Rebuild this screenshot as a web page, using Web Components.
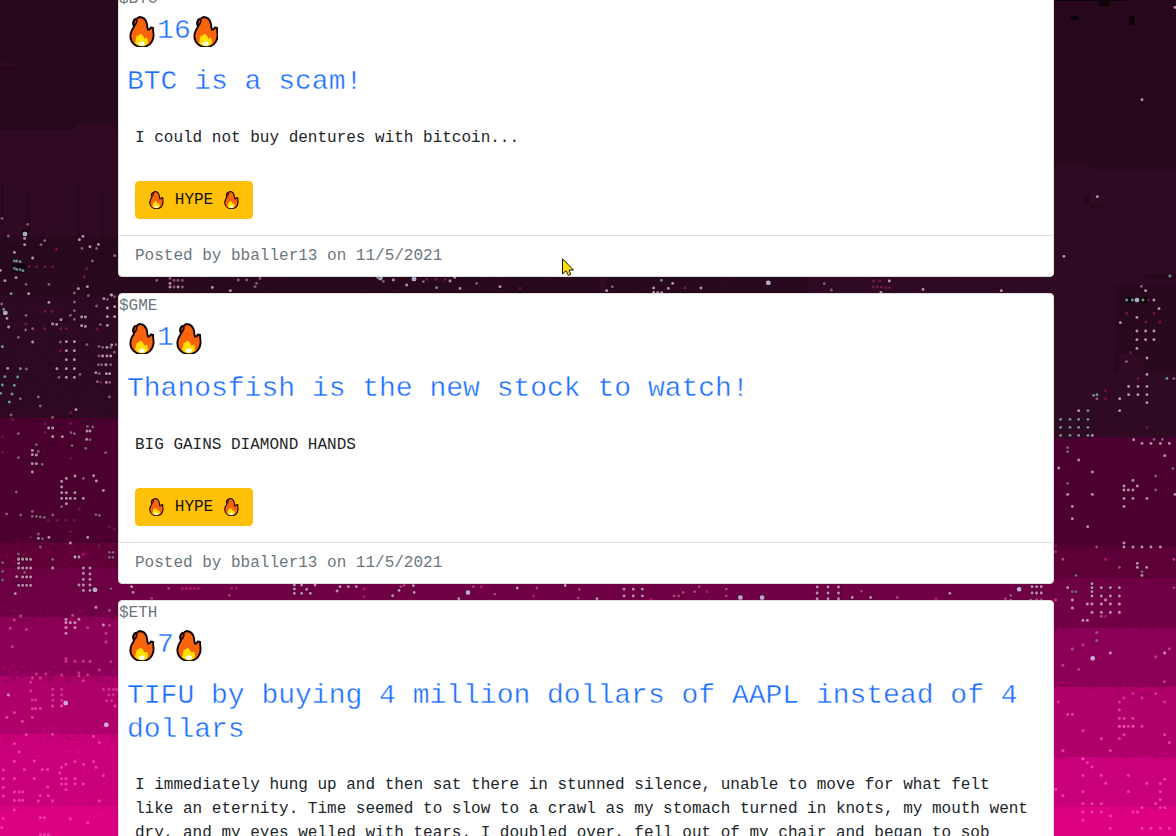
<!DOCTYPE html>
<html lang="en">
<head>
<meta charset="utf-8">
<title>Hype feed</title>
<style>
html,body{margin:0;height:100%;overflow:hidden;background:#25071a}
body{font:16px/24px "Liberation Mono",monospace;color:#212529}
</style>
</head>
<body>
<hype-feed></hype-feed>
<script>
class FlameIcon extends HTMLElement{
  constructor(){super();this.attachShadow({mode:'open'}).innerHTML=`
<style>:host{display:inline-flex;width:1.075em;height:1.12em;justify-content:center;vertical-align:-.2em}svg{display:block;width:.9em;height:1.14em;flex:none}</style>
<svg viewBox="-1 0 74 94" preserveAspectRatio="none" aria-hidden="true">
<path d="M29 3C42 3 50 13 52 25C53 32 53 36 55 41C60 40 62 38 63 34L70 35C69 44 72 51 71 60C69 79 56 91 37 91C17 91 3 78 3 60C3 46 9 38 14 31C8 22 11 8 23 8C23 5 26 4 29 3Z" fill="#f8640c" stroke="#120406" stroke-width="5.5" stroke-linejoin="round"/>
<path d="M14 29C11 21 12 11 21 9C24 16 20 25 14 29Z" fill="#d64a05" stroke="#120406" stroke-width="4.5"/>
<path d="M22 58C28 59 29 54 33 52C39 55 42 61 44 66L53 64C52 70 57 73 54 80C50 87 44 89 36 89C27 89 20 86 17 79C19 71 19 65 22 58Z" fill="#ffde00"/>
<path d="M28 76L33 79L38 72L42 79L46 76C47 83 42 88 36 88C30 87 26 83 28 76Z" fill="#fff"/>
</svg>`}
}
customElements.define('flame-icon',FlameIcon);

class HypeCard extends HTMLElement{
  constructor(){super();this.attachShadow({mode:'open'}).innerHTML=`
<style>
:host{display:flex;flex-direction:column;box-sizing:border-box;min-height:291px;background:#fff;border:1px solid #dfdfdf;border-radius:4px;flex:none}
.ticker{color:#6c757d;height:24px}
.score,.title{color:#1a6dff;font-size:28px;line-height:33.6px;padding:0 8px;font-weight:400;margin:0;-webkit-text-stroke:.4px #fff}
.score{padding-top:3.4px;height:33.6px;display:flex;align-items:center}
.title{padding-top:17px}
.body{padding:27px 16px 16px;display:flex;flex-direction:column;align-items:flex-start;gap:31px}
p{margin:0}
button{font:inherit;line-height:24px;height:38px;border:1px solid #ffc107;background:#ffc107;color:#111;border-radius:4px;padding:6px 12px;display:flex;align-items:center;white-space:pre}
.foot{border-top:1px solid #dfdfdf;padding:8.4px 16px 7px;color:#6c757d}
</style>
<div class="ticker"><slot name="ticker"></slot></div>
<h3 class="score"><flame-icon></flame-icon><slot name="score"></slot><flame-icon></flame-icon></h3>
<h3 class="title"><slot name="title"></slot></h3>
<div class="body"><p><slot></slot></p><button><flame-icon></flame-icon> HYPE <flame-icon></flame-icon></button></div>
<div class="foot"><slot name="meta"></slot></div>`}
}
customElements.define('hype-card',HypeCard);

class CityBackdrop extends HTMLElement{
  constructor(){
    super();
    let s=11;const R=()=>(s=(s*16807)%2147483647)/2147483647;
    let o='';
    const r=(x,y,w,h,f,a=1)=>{o+=`<rect x="${x}" y="${y}" width="${w}" height="${h}" fill="${f}" opacity="${a}"/>`};
    const L=[[0,130,'#26071b'],[130,109,'#300a23'],[236,60,'#28081d'],[296,122,'#2d0a21'],[418,125,'#4c002f'],[543,27,'#610038'],[568,49,'#6d0042'],[617,59,'#8b0056'],[676,58,'#ad0069'],[734,72,'#c90078'],[806,30,'#dc0083']];
    const G=[[0,170,'#26071b'],[169,269,'#2f0a23'],[437,110,'#4b002f'],[547,31,'#5c0037'],[578,50,'#6e0043'],[628,59,'#8b0056'],[687,70,'#af006a'],[757,50,'#ca0079'],[807,29,'#dd0083']];
    for(const b of L)r(0,b[0],600,b[1],b[2]);
    for(const b of G)r(600,b[0],576,b[1],b[2]);
    r(75,125,39,5,'#300a23');r(1054,165,35,5,'#2f0a23');
    r(1,184,3,45,'#29081e');r(26,190,4,42,'#29081e');r(76,184,4,52,'#29081e');r(100,191,4,45,'#29081e');
    r(0,63,15,3,'#300a23');r(1115,285,61,88,'#27081c');r(1119,354,24,18,'#300a23');
    r(1054,0,75,1,'#0c0306');r(1099,0,10,6,'#0c0306');r(1070,16,9,4,'#0c0306');r(1129,16,5,9,'#0c0306');
    r(1084,195,6,10,'#26071b');r(1090,204,15,4,'#27071c');r(1145,274,31,6,'#26071b');
    r(200,277,62,16,'#28081d');r(376,277,60,16,'#27081c');r(606,277,202,16,'#27081c');
    r(118,584,936,16,'#700044');
    // ragged, dithered edges between neighbouring bands
    const edge=(t,x0,x1,up,n,d)=>{for(let i=0;i<n;i++){const k=R()<.5;r((x0+R()*(x1-x0))|0,k?t-(R()*d|0)-2:t+(R()*d*.5|0),2+(R()*4|0),1+(R()*3|0),k?up[1]:up[0],.5)}};
    for(let i=2;i<L.length;i++)edge(L[i][0],0,114,[L[i-1][2],L[i][2]],50,10);
    for(let i=2;i<G.length;i++)edge(G[i][0],1054,1172,[G[i-1][2],G[i][2]],22,5);
    const noise=(x,y,w,h,n,f)=>{for(let i=0;i<n;i++)r((x+R()*w)|0,(y+R()*h)|0,1+(R()*3|0),1+(R()*2|0),f,.5)};
    noise(0,238,114,160,190,'#15060f');noise(0,400,114,50,110,'#2c0820');noise(40,415,60,40,50,'#1f0716');
    noise(1120,290,52,85,50,'#3a0c2a');noise(1056,395,116,42,70,'#450a30');noise(0,540,114,35,90,'#820050');
    noise(118,278,936,14,110,'#3a0d2b');noise(600,584,450,15,110,'#5c0038');noise(0,734,114,100,100,'#e0108c');
    noise(28,440,20,30,30,'#2c0820');noise(60,475,20,30,25,'#2c0820');noise(10,558,24,30,30,'#50002f');noise(1110,690,40,10,25,'#8b0056');
    r(1126,297,22,6,'#0b0408',.8);r(12,264,14,8,'#0d0509',.8);r(22,230,7,7,'#0b0408');

    // lit windows: tile origin, scale, then "x,y" pairs; a trailing letter sets the tone
    const tiles=[
     [0,0,3,'6,655d 83,673d 75,702b 74,715w 74,734w 25,708d 123,734d 134,722d 238,719w 249,709w 246,745d 270,740w 295,733w 290,745d 170,748r 43,757w 98,774w 277,783d 345,767d 43,783c 50,783c 60,785c 43,805c 50,808c 60,809c 69,812c 87,800r 110,800r 135,800r 158,800r 48,833w 1,811w 253,831r 260,806r'],
     [0,280,3,'15,2w 33,41c 78,13d 86,41w 147,13d 147,67w 235,26w 262,20w 265,47d 223,39d 223,66d 223,92d 223,118d 312,56w 333,45w 322,58d 322,84w 322,110w 322,136w 343,50d 290,78d 16,98b 11,88c 21,115w 26,141w 5,72d 78,106d 77,132r 77,150d 55,172d 98,146d 98,186w 135,94r 157,94r 134,146r 158,132w 170,133w 183,119w 211,106d 245,111w 256,111w 245,137w 256,139w 301,134d 291,147r 182,146r 199,146r 7,200c 181,186d 199,185w 223,185w 181,212r 199,212w 223,212w 199,239w 223,239w 199,266w 223,266w 199,292w 223,292w 171,266w 177,292d 240,283d 261,194d 297,199d 308,202d 321,202w 332,202d 348,194d 343,217d 297,228d 308,228w 321,228w 332,228w 295,254d 305,254d 318,254w 332,254d 288,278w 298,281d 319,281w 329,281w 292,305d 302,307r 319,307w 329,307d 23,265w 61,266c 79,267d 15,290c 53,291c 7,315c 43,316c 2,340c 36,342c 28,366c 61,356d 115,351d 121,378d 328,351d 33,405d 37,419r 228,389w 211,398r 158,412d 136,431r 146,444w 158,444w 136,458r 158,470w 187,470w 213,458d 211,430r 223,461d 262,439d 278,441d 261,453w 270,453w 260,478w 270,479d 257,505d 7,470r 55,461d 7,517r 216,497d 109,494d 97,511w 115,514d 97,524w 109,525w 97,551w 109,551w 127,553d 97,576w 55,533d 213,535r 317,518d 49,636d 225,588w 199,595w 185,604w 250,595d 281,587w 289,603w 310,631w 185,621w 185,638w 199,638w 225,638w 185,655w 199,655w 211,655w 225,655w 250,655w 199,671w 185,680d 20,702d 62,705d 97,694d 97,709d 109,709d 121,711d 133,712d 158,705d 145,721r 172,721r 197,721r 223,721r 288,704d 298,706d 238,687r 115,762d 115,775w 127,776d 147,772w 92,772r 121,801d 211,755r 211,789w 263,772w 298,797r 328,740r 343,748r 328,817d 339,817d 328,832d 339,832d 55,822d 55,835d 67,835d 79,835d 250,823r 225,831w 237,831w'],
     [0,556,3,'56,10w 68,10w 80,10w 92,10w 56,22w 56,36w 68,36w 80,36w 92,36w 50,62w 68,63w 80,63w 92,63w 56,88w 68,88w 80,88w 92,88w 74,49d 8,20d 8,46d 8,72d 158,10d 158,36w 225,3w 250,36w 270,36w 250,52w 270,54w 250,70w 270,70w 237,87w 250,87w 270,87w 250,103w 270,103w 285,101b 333,98d 46,113w 288,154w 328,163d 218,178d 62,180d 43,192p 31,217p 79,220p 198,190w 198,200w 211,200w 225,200w 237,190w 198,215w 225,215w 263,215p 198,232w 310,207w 328,208p 318,232p 318,258p 37,272p 198,308p 198,316p 225,316p 250,316p 270,316p 333,317p 298,342p 138,354p 109,354p 97,366p 121,366p 92,379p 185,357p 237,351p 237,360p 263,357p 250,374p 25,417w 158,400p 185,400p 158,417p 185,417p 158,433p 185,433p 158,450p 185,450w 197,441b 92,405p 97,432p 107,432p 97,458p 107,458p 121,458p 43,470p 21,484p 97,484p 67,496p 319,506b 310,400p 327,400p 340,400p 350,400p 327,417p 340,417p 320,434p 335,434p 345,450p 79,536p 158,535p 281,541p 298,560p 43,563p 57,588p 43,616p 73,641p 127,641p 143,641p 10,642p 10,668p 10,694p 10,720p 43,668p 103,615p 103,668p 43,708p 57,708p 68,708p 43,733p 57,733p 68,733p 43,762p 198,625p 225,617p 250,625p 185,634p 179,651p 281,617p 288,634p 310,659p 185,668p 198,668p 225,668p 185,684p 198,684p 225,684p 250,684p 198,701p 143,693p 121,719p 145,719p 115,735p 158,735p 298,735p 10,787p 121,785p 133,785p 211,789p 263,800p 5,815p 121,836p 133,836p 145,836p'],
     [1054,0,3,'264,299w 363,22w 130,590w 30,769w 348,828c'],
     [1054,280,3,'262,19d 275,32w 218,60c 235,60c 249,60b 267,60c 284,60r 300,60w 315,86w 249,112w 199,128w 275,126r 249,153w 275,153w 300,153w 249,179w 275,179w 300,179w 249,205w 279,234w 217,245d 229,218r 218,100r 300,100r 318,126r 279,283w 339,295c 252,295r 360,296d 224,319w 252,319w 279,319w 224,344w 252,344w 279,344w 279,368w 129,344c 119,346c 155,332r 155,356r 129,356d 197,356w 197,392w 74,392w 102,392c 20,418c 48,418c 74,418c 102,418c 20,442c 48,442c 74,442c 102,442c 20,466c 48,466c 74,466c 102,466c 115,466w 279,442r 239,479w 264,490w 291,490w 319,490w 346,490w 300,478d 325,478d 332,527w 357,565d 41,503d 41,515d 74,540w 14,564w 115,576w 41,610d 41,643w 115,643w 55,679w 55,716w 101,740w 305,588d 305,630d 237,601w 210,618w 250,618w 210,630w 223,630w 237,630w 210,655w 237,655w 279,655w 210,679w 363,643w 128,801p 210,789w 210,801w 237,801w 264,801w 291,801w 319,801w 27,837p 5,797r 5,815r'],
     [1054,556,3,'27,10p 196,34p 250,22w 250,34w 278,34w 264,47d 264,58w 155,10r 360,10p 66,58d 41,95w 55,107d 66,107d 55,132w 55,156w 114,83w 114,95w 114,107w 114,120w 114,144w 100,144w 114,169w 142,95w 142,120w 142,144w 142,169w 155,132w 169,95w 169,120w 169,144w 169,169w 196,95w 196,120w 196,144w 196,169w 87,193w 100,193w 142,181d 155,181r 5,132p 360,95p 128,230d 128,254d 87,267p 55,279d 116,307b 169,291w 27,328p 74,340p 305,303p 332,291w 346,279p 332,377p 237,413p 210,426p 264,426p 305,413p 196,438p 196,462p 13,438p 41,475p 55,475p 196,487p 210,487p 237,487p 196,511w 210,511w 223,511p 237,511w 264,511p 87,524p 210,536p 142,548p 196,548p 332,438p 332,536p 346,560p 27,584p 169,584p 87,609w 100,620p 114,633p 87,658p 142,658p 223,658p 155,682p 278,682p 332,670p 319,682p 87,707p 223,707p 319,707p 319,731p 27,719p 305,743p 87,743p 114,743p 142,743p 87,768p 114,768p 142,768p 87,793p 237,768p 250,768p 264,755p 319,755p 332,755p 169,780p 169,817p 264,817p 291,817p 319,817p 346,817p 5,700p'],
     [110,170,3,'14,257d 140,331d 180,325d 180,340w 180,351w 192,351d 204,351w 217,351d 192,331d 204,331d 217,331d 307,352w 361,362w 385,330d 410,330d 440,340d 450,325d 435,350d 811,324b 803,322c 820,334d 912,327b 950,328r 978,328r 1005,328r 1034,322w 5,375w 14,410w 14,440w 5,525w'],
     [540,225,3,'-440,165w -400,180w -350,170d -310,188c -270,168w -240,190w -190,175d -120,185w -60,190r 200,197w 217,185d 341,189w 341,202w 353,203w 365,203w 385,190w 364,166c 398,175w 435,189r 483,189w 685,173b 853,176d 874,195d 1000,168r 1020,168r 1000,186r 1012,186r 1024,186r 1037,188r 1048,168w 1048,188r 1149,193w 1384,197w 1023,202w'],
     [115,570,3,'50,50w 54,67w 161,55p 202,56r 214,56r 226,56r 238,56r 250,56r 350,55r 363,55r 110,85p 343,76p 538,45w 538,57w 538,70w 560,45w 575,58w 560,70w 586,70w 600,45w 666,63w 675,50w 700,50w 724,50w 747,57r 747,80r 833,77w 852,61w 867,46p 895,47w'],
     [400,580,2.397,'2,16p 34,30w 141,45w 163,30b 176,16p 195,16r 227,34p 281,19w 267,52p 328,19p 320,39r 396,13w 430,23p 427,43p 472,45w 537,22w 559,22w 581,22w 537,38w 559,38w 581,38w 532,53w 539,53w 602,46r 657,38p 668,38p 679,30p 706,28p 717,16p 736,28r 782,22p 782,38p 816,42b 868,42b 1000,17w 1026,17w 1051,17w 1000,31w 1026,31w 1051,31w 1000,45w 1026,45w 1051,45w 1084,42w 1106,27p 1128,42w 1138,56w 1192,42p 1236,56w 1285,45r 1318,32w 1318,56w 1451,45p 1464,37d 1464,49d 1484,22b 1515,16w 1526,16w 1537,16w 1515,31w 1526,31w 1537,31w 1512,48d 1526,48d 1537,48d']];
    for(const [ox,oy,k,list] of tiles)for(const t of list.split(' ')){
      const m=t.match(/(-?\d+),(\d+)(\w)/),x=ox+m[1]/k,y=oy+m[2]/k,c=m[3];
      const hot=y>705,col={w:hot?'#ff63c9':'#e3a6cd',d:hot?'#f23bac':'#a0688d',r:y>550?'#bd1680':'#7b174f',c:'#83a8b5',b:'#d4cdf5',p:hot?'#fb46b5':'#de3c9e'}[c];
      const z=c=='b'?4.6:2.9;
      if(y<600&&c!='r')o+=`<rect x="${(x-z/2-.7).toFixed(1)}" y="${(y-z/2-.7).toFixed(1)}" width="${z+1.4}" height="${z+1.4}" rx="1" fill="#14040d" opacity=".35"/>`;
      o+=`<rect x="${(x-z/2).toFixed(1)}" y="${(y-z/2).toFixed(1)}" width="${z}" height="${z}" rx="${z*.4}" fill="${col}" opacity=".82"/>`;
    }
    this.attachShadow({mode:'open'}).innerHTML=`<style>:host{display:block}svg{display:block}</style><svg width="1176" height="836" viewBox="0 0 1176 836" aria-hidden="true">${o}</svg>`;
  }
}
customElements.define('city-backdrop',CityBackdrop);

class HypeFeed extends HTMLElement{
  constructor(){super();this.attachShadow({mode:'open'}).innerHTML=`
<style>
:host{display:grid;height:836px;width:1176px;overflow:hidden;position:relative}
city-backdrop,main{grid-area:1/1}
main{position:relative;height:836px;margin:-14px 0 0 118px;width:936px;display:flex;flex-direction:column;gap:16px}
.pointer{position:absolute;left:562px;top:258px}
</style>
<city-backdrop></city-backdrop>
<main>
<hype-card><span slot="ticker">$BTC</span><span slot="score">16</span><span slot="title">BTC is a scam!</span>I could not buy dentures with bitcoin...<span slot="meta">Posted by bballer13 on 11/5/2021</span></hype-card>
<hype-card><span slot="ticker">$GME</span><span slot="score">1</span><span slot="title">Thanosfish is the new stock to watch!</span>BIG GAINS DIAMOND HANDS<span slot="meta">Posted by bballer13 on 11/5/2021</span></hype-card>
<hype-card><span slot="ticker">$ETH</span><span slot="score">7</span><span slot="title">TIFU by buying 4 million dollars of AAPL instead of 4 dollars</span>I immediately hung up and then sat there in stunned silence, unable to move for what felt like an eternity. Time seemed to slow to a crawl as my stomach turned in knots, my mouth went dry, and my eyes welled with tears. I doubled over, fell out of my chair and began to sob</hype-card>
</main>
<svg class="pointer" width="13" height="19" viewBox="0 0 13 19" aria-hidden="true"><path d="M.5 .8V16L4 12.8L6.3 17.4L8.7 16.3L7 12H11.5Z" fill="#ffe100" stroke="#1c1500"/></svg>`}
}
customElements.define('hype-feed',HypeFeed);
</script>
</body>
</html>
